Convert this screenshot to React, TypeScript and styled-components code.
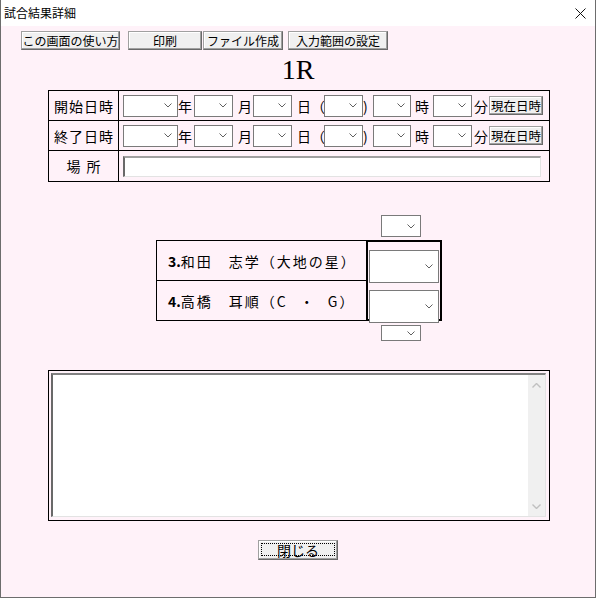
import React from "react"
import styled, { createGlobalStyle } from "styled-components"

const GlobalStyle = createGlobalStyle`
  html, body {
    margin: 0;
    padding: 0;
    background: #fff;
  }
  body {
    font-family: "Noto Sans CJK JP", "DejaVu Sans", sans-serif;
    font-size: 14px;
    color: #000;
  }
`

const Window = styled.div`
  width: 596px;
  height: 598px;
  box-sizing: border-box;
  border: 1px solid #6d6d6d;
  border-top: none;
  background: #fff2f9;
  display: flex;
  flex-direction: column;
`

const TitleBar = styled.div`
  height: 26px;
  flex-shrink: 0;
  background: #fff;
  display: flex;
  align-items: center;
  justify-content: space-between;
  padding: 0 9px 0 3px;
  font-size: 12px;
  line-height: 14px;
`

const Toolbar = styled.div`
  display: flex;
  margin-top: 5px;
  padding-left: 20px;
`

// classic 3d push button
const PushButton = styled.button<{ $w: number; $h?: number; $ml?: number; $fs?: number }>`
  width: ${(p) => p.$w}px;
  height: ${(p) => p.$h ?? 19}px;
  margin: 0 0 0 ${(p) => p.$ml ?? 0}px;
  padding: 0;
  box-sizing: border-box;
  flex-shrink: 0;
  background: #f0f0f0;
  border: 1px solid;
  border-color: #a0a0a0 #696969 #696969 #a0a0a0;
  box-shadow: inset -1px -1px #a0a0a0, inset 1px 1px #fff;
  font-family: "Noto Sans CJK JP", sans-serif;
  font-size: ${(p) => p.$fs ?? 12}px;
  line-height: 14px;
  color: #000;
  white-space: nowrap;
  display: flex;
  align-items: center;
  justify-content: center;
`

const BigTitle = styled.div`
  height: 40px;
  text-align: center;
  font-family: "Liberation Serif", "Times New Roman", serif;
  font-size: 28px;
  line-height: 40px;
`

const DateTable = styled.div`
  margin-left: 47px;
  width: 502px;
  box-sizing: border-box;
  border: 1px solid #000;
`

const FormRow = styled.div<{ $h: number; $last?: boolean }>`
  display: grid;
  grid-template-columns: 70px 1fr;
  height: ${(p) => p.$h}px;
  box-sizing: border-box;
  border-bottom: ${(p) => (p.$last ? "none" : "1px solid #000")};
`

const RowLabel = styled.div<{ $ls?: number }>`
  border-right: 1px solid #000;
  display: flex;
  align-items: center;
  justify-content: center;
  letter-spacing: ${(p) => p.$ls ?? 1}px;
  padding-left: ${(p) => p.$ls ?? 1}px;
  line-height: 16px;
`

const RowBody = styled.div`
  display: flex;
  align-items: center;
  padding-left: 4px;
`

const Unit = styled.span<{ $w: number; $pl?: number }>`
  width: ${(p) => p.$w}px;
  padding-left: ${(p) => p.$pl ?? 0}px;
  box-sizing: border-box;
  flex-shrink: 0;
  white-space: nowrap;
  line-height: 16px;
`

const SelectBox = styled.div<{ $w: number; $h?: number; $ml?: number; $mt?: number }>`
  width: ${(p) => p.$w}px;
  height: ${(p) => p.$h ?? 22}px;
  margin-left: ${(p) => p.$ml ?? 0}px;
  margin-top: ${(p) => p.$mt ?? 0}px;
  box-sizing: border-box;
  flex-shrink: 0;
  border: 1px solid #7a7a7a;
  background: #fff;
  display: flex;
  align-items: center;
  justify-content: flex-end;
  padding-right: 5px;
`

const TextInput = styled.div`
  width: 418px;
  height: 21px;
  box-sizing: border-box;
  background: #fff;
  border-style: solid;
  border-width: 2px 1px 1px 2px;
  border-color: #a0a0a0 #e3e3e3 #e3e3e3 #696969;
`

const Chevron = ({ color = "#606060" }: { color?: string }) => (
  <svg width="8" height="5" viewBox="0 0 8 5">
    <path d="M0.5 0.5 L4 4 L7.5 0.5" fill="none" stroke={color} strokeWidth="1" />
  </svg>
)

const Select = ({ w, h, ml, mt }: { w: number; h?: number; ml?: number; mt?: number }) => (
  <SelectBox $w={w} $h={h} $ml={ml} $mt={mt}>
    <Chevron />
  </SelectBox>
)

const MatchSection = styled.div`
  margin: 33px 0 0 155px;
  width: 286px;
  display: flex;
  flex-direction: column;
`

const MatchTable = styled.div`
  display: flex;
  margin-top: 3px;
  height: 81px;
`

const NameColumn = styled.div`
  width: 210px;
  box-sizing: border-box;
  border: 1px solid #000;
  border-right: none;
  display: flex;
  flex-direction: column;
`

const NameRow = styled.div<{ $last?: boolean }>`
  flex: 1;
  display: flex;
  align-items: center;
  padding-left: 11px;
  border-bottom: ${(p) => (p.$last ? "none" : "1px solid #000")};
  letter-spacing: 2px;
  line-height: 16px;
  white-space: nowrap;
  b {
    letter-spacing: 0;
  }
`

const Tight = styled.span`
  letter-spacing: 0;
  padding-right: 2px;
`

const ScoreBox = styled.div`
  width: 76px;
  height: 81px;
  box-sizing: border-box;
  border: 2px solid #000;
  display: flex;
  flex-direction: column;
  gap: 7px;
  padding: 8px 0 0 1px;
`

const MemoFrame = styled.div`
  margin: 29px 0 0 47px;
  width: 502px;
  height: 151px;
  box-sizing: border-box;
  border: 1px solid #000;
  padding: 2px 3px 3px 2px;
`

const MemoArea = styled.div`
  height: 100%;
  box-sizing: border-box;
  background: #fff;
  border-style: solid;
  border-width: 2px 1px 1px 2px;
  border-color: #828282 #e3e3e3 #e3e3e3 #696969;
  display: flex;
  justify-content: flex-end;
`

const ScrollTrack = styled.div`
  width: 17px;
  background: #f0f0f0;
  display: flex;
  flex-direction: column;
  justify-content: space-between;
  align-items: center;
  padding: 8px 0 7px;
`

const Footer = styled.div`
  display: flex;
  justify-content: center;
  margin-top: 19px;
`

const FocusRing = styled.span`
  flex: 1;
  align-self: stretch;
  margin: 2px 2px 3px 2px;
  border: 1px dotted #000;
  display: flex;
  align-items: center;
  justify-content: center;
  font-size: 14px;
  line-height: 14px;
`

const dateRow = (
  <>
    <Select w={55} />
    <Unit $w={16}>年</Unit>
    <Select w={39} />
    <Unit $w={20} $pl={5}>月</Unit>
    <Select w={39} />
    <Unit $w={32} $pl={5}>日（</Unit>
    <Select w={39} />
    <Unit $w={10}>)</Unit>
    <Select w={38} />
    <Unit $w={22} $pl={4}>時</Unit>
    <Select w={39} />
    <Unit $w={17} $pl={2}>分</Unit>
    <PushButton $w={54} $fs={12.5}>現在日時</PushButton>
  </>
)

export default function App() {
  return (
    <>
      <GlobalStyle />
      <Window>
        <TitleBar>
          <span>試合結果詳細</span>
          <svg width="11" height="11" viewBox="0 0 11 11">
            <path d="M0.5 0.5 L10.5 10.5 M10.5 0.5 L0.5 10.5" stroke="#111" strokeWidth="1" />
          </svg>
        </TitleBar>

        <Toolbar>
          <PushButton $w={99}>この画面の使い方</PushButton>
          <PushButton $w={74} $ml={8}>印刷</PushButton>
          <PushButton $w={80} $ml={1}>ファイル作成</PushButton>
          <PushButton $w={100} $ml={5}>入力範囲の設定</PushButton>
        </Toolbar>

        <BigTitle>1R</BigTitle>

        <DateTable>
          <FormRow $h={30}>
            <RowLabel>開始日時</RowLabel>
            <RowBody>{dateRow}</RowBody>
          </FormRow>
          <FormRow $h={30}>
            <RowLabel>終了日時</RowLabel>
            <RowBody>{dateRow}</RowBody>
          </FormRow>
          <FormRow $h={30} $last>
            <RowLabel $ls={6}>場所</RowLabel>
            <RowBody>
              <TextInput />
            </RowBody>
          </FormRow>
        </DateTable>

        <MatchSection>
          <Select w={40} ml={225} />
          <MatchTable>
            <NameColumn>
              <NameRow>
                <b>3.</b>和田　志学（大地の星）
              </NameRow>
              <NameRow $last>
                <b>4.</b>高橋　耳順（<Tight>C　・　G</Tight>）
              </NameRow>
            </NameColumn>
            <ScoreBox>
              <Select w={70} h={33} />
              <Select w={70} h={33} />
            </ScoreBox>
          </MatchTable>
          <Select w={40} h={16} ml={225} mt={4} />
        </MatchSection>

        <MemoFrame>
          <MemoArea>
            <ScrollTrack>
              <svg width="9" height="5" viewBox="0 0 9 5">
                <path d="M0.5 4.5 L4.5 0.5 L8.5 4.5" fill="none" stroke="#c0c0c0" strokeWidth="1.4" />
              </svg>
              <svg width="9" height="5" viewBox="0 0 9 5">
                <path d="M0.5 0.5 L4.5 4.5 L8.5 0.5" fill="none" stroke="#c0c0c0" strokeWidth="1.4" />
              </svg>
            </ScrollTrack>
          </MemoArea>
        </MemoFrame>

        <Footer>
          <PushButton $w={80} $h={20}>
            <FocusRing>閉じる</FocusRing>
          </PushButton>
        </Footer>
      </Window>
    </>
  )
}
